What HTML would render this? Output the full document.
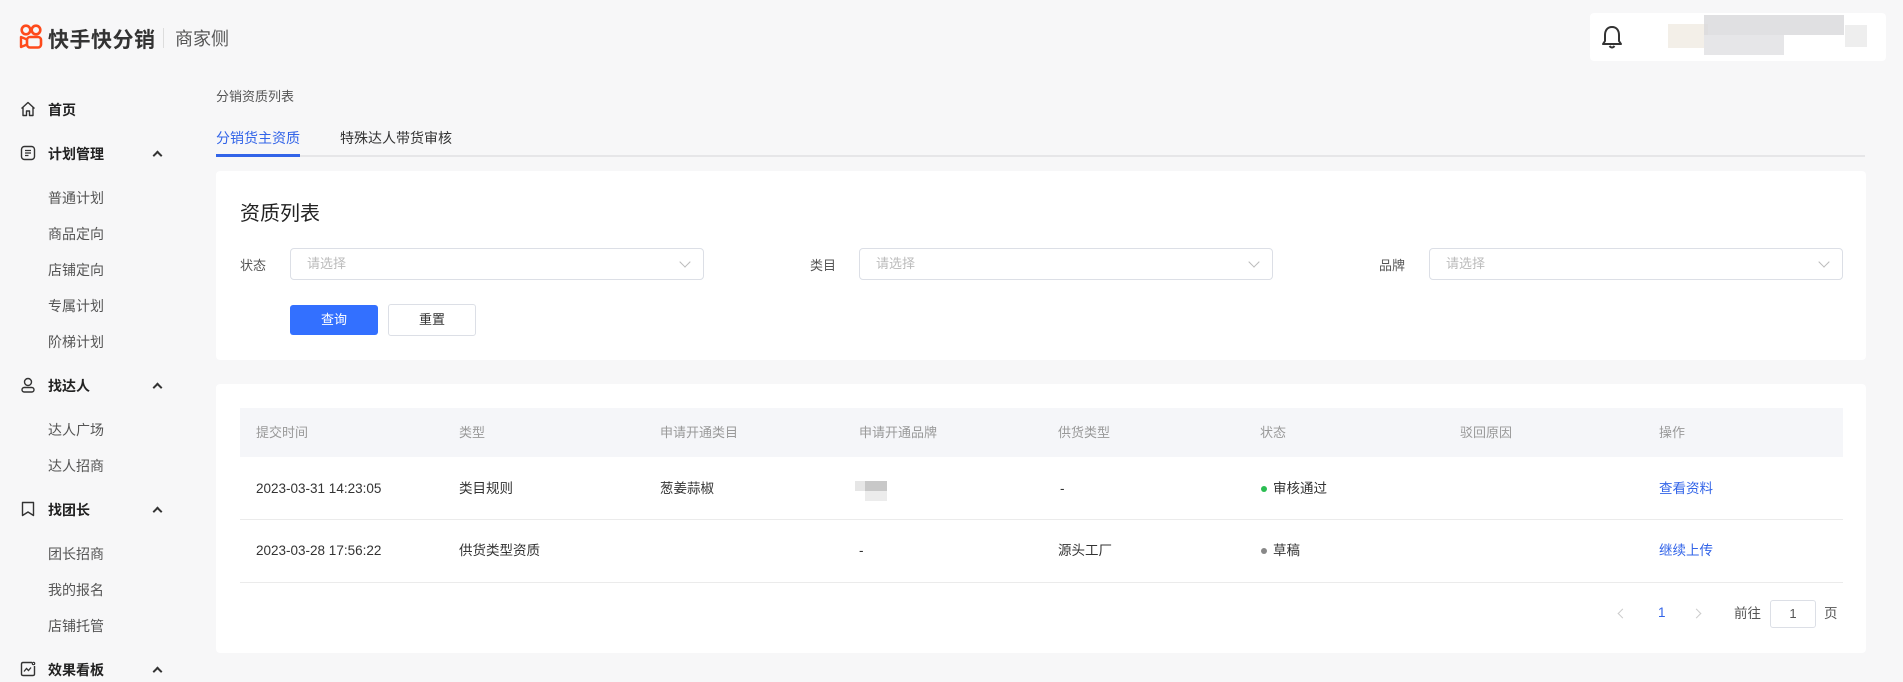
<!DOCTYPE html>
<html><head><meta charset="utf-8">
<style>
*{margin:0;padding:0;box-sizing:border-box}
body{width:1903px;height:682px;overflow:hidden;background:#f7f7f8;font-family:"Liberation Sans","Noto Sans CJK SC",sans-serif;color:#333;position:relative}
.a{position:absolute;white-space:nowrap}
.side{font-size:14px;color:#555}
.grp{font-size:14px;font-weight:bold;color:#222}
.chev{position:absolute;left:154px;width:7px;height:7px;border-left:2px solid #333;border-top:2px solid #333;transform:rotate(45deg)}
.card{position:absolute;background:#fff;border-radius:4px}
.sel{position:absolute;height:32px;border:1px solid #dcdfe6;border-radius:4px;background:#fff;font-size:13px;color:#bbb;padding-left:16px;line-height:30px}
.sel:after{content:"";position:absolute;right:14px;top:9px;width:7px;height:7px;border-right:1px solid #bbb;border-bottom:1px solid #bbb;transform:rotate(45deg)}
.th{font-size:13px;color:#999;line-height:20px}
.td{font-size:13.5px;color:#333;line-height:20px}
</style></head><body>
<svg class="a" style="left:19px;top:24px" width="24" height="25" viewBox="0 0 24 25">
<circle cx="7" cy="6" r="4.3" fill="none" stroke="#fe4a1b" stroke-width="2.6"/>
<circle cx="17" cy="6" r="4.3" fill="none" stroke="#fe4a1b" stroke-width="2.6"/>
<rect x="8" y="13" width="14" height="10.5" rx="3" fill="none" stroke="#fe4a1b" stroke-width="2.6"/>
<path d="M8 15.5 L2 13 L2 23 L8 20.5" fill="none" stroke="#fe4a1b" stroke-width="2.4" stroke-linejoin="round"/>
</svg>
<div class="a" style="left:48px;top:24px;font-size:21px;font-weight:bold;color:#333;letter-spacing:0.5px">快手快分销</div>
<div class="a" style="left:163px;top:28px;width:1px;height:20px;background:#ddd"></div>
<div class="a" style="left:175px;top:25px;font-size:18px;color:#555">商家侧</div>
<div class="a" style="left:1590px;top:13px;width:296px;height:48px;background:#fff;border-radius:4px"></div>
<svg class="a" style="left:1601px;top:24px" width="22" height="26" viewBox="0 0 22 26"><path d="M11 3 C6 3 4 7 4 11 L4 17 L2 20 L20 20 L18 17 L18 11 C18 7 16 3 11 3 Z" fill="none" stroke="#333" stroke-width="2" stroke-linejoin="round"/><path d="M8.5 22 Q11 25 13.5 22" fill="none" stroke="#333" stroke-width="2"/></svg>
<div class="a" style="left:1668px;top:24px;width:40px;height:24px;background:#eee8de;opacity:.7"></div>
<div class="a" style="left:1704px;top:15px;width:140px;height:20px;background:#d8d8db;opacity:.8"></div>
<div class="a" style="left:1704px;top:35px;width:80px;height:20px;background:#e6e6e8"></div>
<div class="a" style="left:1845px;top:25px;width:22px;height:22px;background:#eee"></div>
<svg class="a" style="left:20px;top:101px" width="16" height="16" viewBox="0 0 16 16"><path d="M1.5 7.5 L8 1.5 L14.5 7.5 M3 6.5 V14.5 H6.5 V10 H9.5 V14.5 H13 V6.5" fill="none" stroke="#333" stroke-width="1.4" stroke-linejoin="round"/></svg>
<div class="a grp" style="left:48px;top:100px">首页</div>
<svg class="a" style="left:20px;top:145px" width="16" height="16" viewBox="0 0 16 16"><rect x="1.5" y="1.5" width="13" height="13" rx="3" fill="none" stroke="#333" stroke-width="1.4"/><path d="M5 5.5H11M5 8H11M5 10.5H8.5" stroke="#333" stroke-width="1.3"/></svg>
<div class="a grp" style="left:48px;top:144px">计划管理</div><div class="chev" style="top:152px"></div>
<div class="a side" style="left:48px;top:188px">普通计划</div>
<div class="a side" style="left:48px;top:224px">商品定向</div>
<div class="a side" style="left:48px;top:260px">店铺定向</div>
<div class="a side" style="left:48px;top:296px">专属计划</div>
<div class="a side" style="left:48px;top:332px">阶梯计划</div>
<svg class="a" style="left:20px;top:377px" width="16" height="16" viewBox="0 0 16 16"><circle cx="8" cy="5" r="3.5" fill="none" stroke="#333" stroke-width="1.4"/><rect x="2" y="10.5" width="12" height="4.5" rx="2.2" fill="none" stroke="#333" stroke-width="1.4"/></svg>
<div class="a grp" style="left:48px;top:376px">找达人</div><div class="chev" style="top:384px"></div>
<div class="a side" style="left:48px;top:420px">达人广场</div>
<div class="a side" style="left:48px;top:456px">达人招商</div>
<svg class="a" style="left:20px;top:501px" width="16" height="16" viewBox="0 0 16 16"><path d="M2.5 1.5 H13.5 V14.5 L8 11 L2.5 14.5 Z" fill="none" stroke="#333" stroke-width="1.4" stroke-linejoin="round"/></svg>
<div class="a grp" style="left:48px;top:500px">找团长</div><div class="chev" style="top:508px"></div>
<div class="a side" style="left:48px;top:544px">团长招商</div>
<div class="a side" style="left:48px;top:580px">我的报名</div>
<div class="a side" style="left:48px;top:616px">店铺托管</div>
<svg class="a" style="left:20px;top:661px" width="16" height="16" viewBox="0 0 16 16"><path d="M12 1.5 H3 Q1.5 1.5 1.5 3 V13 Q1.5 14.5 3 14.5 H13 Q14.5 14.5 14.5 13 V5" fill="none" stroke="#333" stroke-width="1.4"/><circle cx="13.5" cy="2.5" r="1.2" fill="none" stroke="#333" stroke-width="1.2"/><path d="M4 10.5 L6.5 7.5 L8.5 9.5 L11 6.5" fill="none" stroke="#333" stroke-width="1.3"/></svg>
<div class="a grp" style="left:48px;top:660px">效果看板</div><div class="chev" style="top:668px"></div>
<div class="a" style="left:216px;top:86px;font-size:13px;color:#555">分销资质列表</div>
<div class="a" style="left:216px;top:128px;font-size:14px;color:#3264e8">分销货主资质</div>
<div class="a" style="left:340px;top:128px;font-size:14px;color:#333">特殊达人带货审核</div>
<div class="a" style="left:216px;top:155px;width:1649px;height:2px;background:#e6e6e8"></div>
<div class="a" style="left:216px;top:154px;width:84px;height:3px;background:#3264e8"></div>
<div class="card" style="left:216px;top:171px;width:1650px;height:189px"></div>
<div class="a" style="left:240px;top:197px;font-size:20px;color:#222">资质列表</div>
<div class="a" style="left:240px;top:255px;font-size:13px;color:#555">状态</div>
<div class="sel" style="left:290px;top:248px;width:414px">请选择</div>
<div class="a" style="left:810px;top:255px;font-size:13px;color:#555">类目</div>
<div class="sel" style="left:859px;top:248px;width:414px">请选择</div>
<div class="a" style="left:1379px;top:255px;font-size:13px;color:#555">品牌</div>
<div class="sel" style="left:1429px;top:248px;width:414px">请选择</div>
<div class="a" style="left:290px;top:305px;width:88px;height:30px;background:#3370ff;border-radius:3px;color:#fff;font-size:13px;text-align:center;line-height:30px">查询</div>
<div class="a" style="left:388px;top:304px;width:88px;height:32px;border:1px solid #dcdfe6;border-radius:3px;background:#fff;color:#333;font-size:13px;text-align:center;line-height:30px">重置</div>
<div class="card" style="left:216px;top:384px;width:1650px;height:269px"></div>
<div class="a" style="left:240px;top:408px;width:1603px;height:49px;background:#f5f6f9"></div>
<div class="a th" style="left:256px;top:423px">提交时间</div>
<div class="a th" style="left:459px;top:423px">类型</div>
<div class="a th" style="left:660px;top:423px">申请开通类目</div>
<div class="a th" style="left:859px;top:423px">申请开通品牌</div>
<div class="a th" style="left:1058px;top:423px">供货类型</div>
<div class="a th" style="left:1260px;top:423px">状态</div>
<div class="a th" style="left:1460px;top:423px">驳回原因</div>
<div class="a th" style="left:1659px;top:423px">操作</div>
<div class="a td" style="left:256px;top:479px">2023-03-31 14:23:05</div>
<div class="a td" style="left:459px;top:479px">类目规则</div>
<div class="a td" style="left:660px;top:479px">葱姜蒜椒</div>
<div class="a" style="left:855px;top:481px;width:10px;height:10px;background:#e6e6e6"></div>
<div class="a" style="left:865px;top:481px;width:22px;height:10px;background:#c8c8c8"></div>
<div class="a" style="left:865px;top:491px;width:22px;height:10px;background:#ececec"></div>
<div class="a td" style="left:1060px;top:479px">-</div>
<div class="a" style="left:1261px;top:486px;width:6px;height:6px;border-radius:50%;background:#2bbd52"></div>
<div class="a td" style="left:1273px;top:479px">审核通过</div>
<div class="a td" style="left:1659px;top:479px;color:#3264e8">查看资料</div>
<div class="a" style="left:240px;top:519px;width:1603px;height:1px;background:#ebebeb"></div>
<div class="a td" style="left:256px;top:541px">2023-03-28 17:56:22</div>
<div class="a td" style="left:459px;top:541px">供货类型资质</div>
<div class="a td" style="left:859px;top:541px">-</div>
<div class="a td" style="left:1058px;top:541px">源头工厂</div>
<div class="a" style="left:1261px;top:548px;width:6px;height:6px;border-radius:50%;background:#888"></div>
<div class="a td" style="left:1273px;top:541px">草稿</div>
<div class="a td" style="left:1659px;top:541px;color:#3264e8">继续上传</div>
<div class="a" style="left:240px;top:582px;width:1603px;height:1px;background:#ebebeb"></div>
<div class="a" style="left:1619px;top:610px;width:7px;height:7px;border-left:1.5px solid #ccc;border-bottom:1.5px solid #ccc;transform:rotate(45deg)"></div>
<div class="a td" style="left:1658px;top:603px;color:#3264e8">1</div>
<div class="a" style="left:1693px;top:610px;width:7px;height:7px;border-right:1.5px solid #ccc;border-top:1.5px solid #ccc;transform:rotate(45deg)"></div>
<div class="a td" style="left:1734px;top:604px;color:#555">前往</div>
<div class="a" style="left:1770px;top:600px;width:46px;height:28px;border:1px solid #dcdfe6;border-radius:3px;text-align:center;line-height:26px;font-size:13px;color:#555">1</div>
<div class="a td" style="left:1824px;top:604px;color:#555">页</div>
</body></html>
